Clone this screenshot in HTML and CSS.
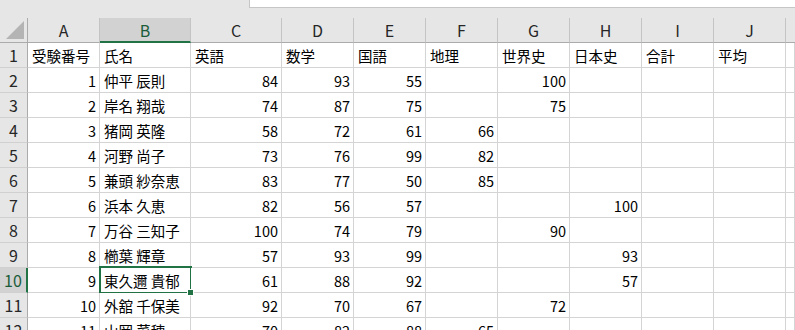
FILE: index.html
```html
<!DOCTYPE html>
<html>
<head>
    <title>受験成績</title>
    <link rel="stylesheet" href="styles.css">
</head>
<body>
    <div class="topbar">
        <div class="formula-box"></div>
    </div>
    <div class="sheet">
        <div class="corner"><span class="tri"></span></div>
        <div class="colhead">A</div>
        <div class="colhead selected">B</div>
        <div class="colhead">C</div>
        <div class="colhead">D</div>
        <div class="colhead">E</div>
        <div class="colhead">F</div>
        <div class="colhead">G</div>
        <div class="colhead">H</div>
        <div class="colhead">I</div>
        <div class="colhead">J</div>
        <div class="colhead last"></div>
    </div>
    <div class="sheet" id="body"></div>

    <script>
        const rows = [
            ['受験番号', '氏名', '英語', '数学', '国語', '地理', '世界史', '日本史', '合計', '平均'],
            [1, '仲平 辰則', 84, 93, 55, '', 100, '', '', ''],
            [2, '岸名 翔哉', 74, 87, 75, '', 75, '', '', ''],
            [3, '猪岡 英隆', 58, 72, 61, 66, '', '', '', ''],
            [4, '河野 尚子', 73, 76, 99, 82, '', '', '', ''],
            [5, '兼頭 紗奈恵', 83, 77, 50, 85, '', '', '', ''],
            [6, '浜本 久恵', 82, 56, 57, '', '', 100, '', ''],
            [7, '万谷 三知子', 100, 74, 79, '', 90, '', '', ''],
            [8, '櫛葉 輝章', 57, 93, 99, '', '', 93, '', ''],
            [9, '東久邇 貴郁', 61, 88, 92, '', '', 57, '', ''],
            [10, '外舘 千保美', 92, 70, 67, '', 72, '', '', ''],
            [11, '山岡 菜穂', 70, 82, 88, 65, '', '', '', '']
        ];

        const body = document.getElementById('body');
        rows.forEach((row, r) => {
            const num = r + 1;
            let html = '<div class="rowhead' + (num === 10 ? ' selected' : '') + '">' + num + '</div>';
            row.forEach((value, c) => {
                let cls = 'cell';
                if (typeof value === 'number') cls += ' num';
                if (num === 10 && c === 1) cls += ' active';
                html += '<div class="' + cls + '">' + value + '</div>';
            });
            html += '<div class="cell"></div>';
            body.insertAdjacentHTML('beforeend', html);
        });
    </script>
</body>
</html>
```

FILE: styles.css
```css
body {
    margin: 0;
    background-color: #e6e6e6;
    font-family: "Noto Sans CJK JP", "Noto Sans", sans-serif;
    overflow: hidden;
}

.topbar {
    height: 18px;
    display: flex;
    justify-content: flex-end;
}

.formula-box {
    width: 545px;
    height: 7px;
    background-color: #ffffff;
    border-left: 1px solid #c6c6c6;
    border-bottom: 1px solid #c6c6c6;
}

.sheet {
    display: grid;
    grid-template-columns: 28px 72px 91px 91px 72px 72px 72px 72px 72px 72px 72px 1fr;
    grid-auto-rows: 25px;
}

.sheet:first-of-type {
    grid-auto-rows: 24px;
}

.corner {
    position: relative;
    border-bottom: 1px solid #ababab;
    border-right: 1px solid #ababab;
}

.tri {
    position: absolute;
    right: 3px;
    bottom: 3px;
    width: 0;
    height: 0;
    border-left: 18px solid transparent;
    border-bottom: 18px solid #b4b4b4;
}

.colhead {
    display: flex;
    align-items: center;
    justify-content: center;
    font-size: 16px;
    color: #262626;
    border-bottom: 1px solid #ababab;
    border-right: 1px solid #c4c4c4;
}

.colhead.selected {
    background-color: #d2d2d2;
    color: #1a5c3a;
    border-bottom: 2px solid #217346;
}

.colhead.last {
    border-right: none;
}

.rowhead {
    display: flex;
    align-items: center;
    justify-content: center;
    font-size: 16px;
    color: #262626;
    border-right: 1px solid #ababab;
    border-bottom: 1px solid #d0d0d0;
}

.rowhead.selected {
    background-color: #d2d2d2;
    color: #1a5c3a;
    border-right: 2px solid #217346;
}

.cell {
    position: relative;
    background-color: #ffffff;
    border-right: 1px solid #d4d4d4;
    border-bottom: 1px solid #d4d4d4;
    font-size: 14.5px;
    color: #000000;
    padding: 0 3px 0 4px;
    display: flex;
    align-items: center;
    white-space: nowrap;
    overflow: visible;
}

.cell.num {
    justify-content: flex-end;
}

.cell.active::after {
    content: "";
    position: absolute;
    left: -1px;
    top: -2px;
    right: -2px;
    bottom: -2px;
    border: 2px solid #217346;
}

.cell.active::before {
    content: "";
    position: absolute;
    right: -4px;
    bottom: -4px;
    width: 5px;
    height: 5px;
    background-color: #217346;
    border: 1px solid #ffffff;
    z-index: 1;
}
```
